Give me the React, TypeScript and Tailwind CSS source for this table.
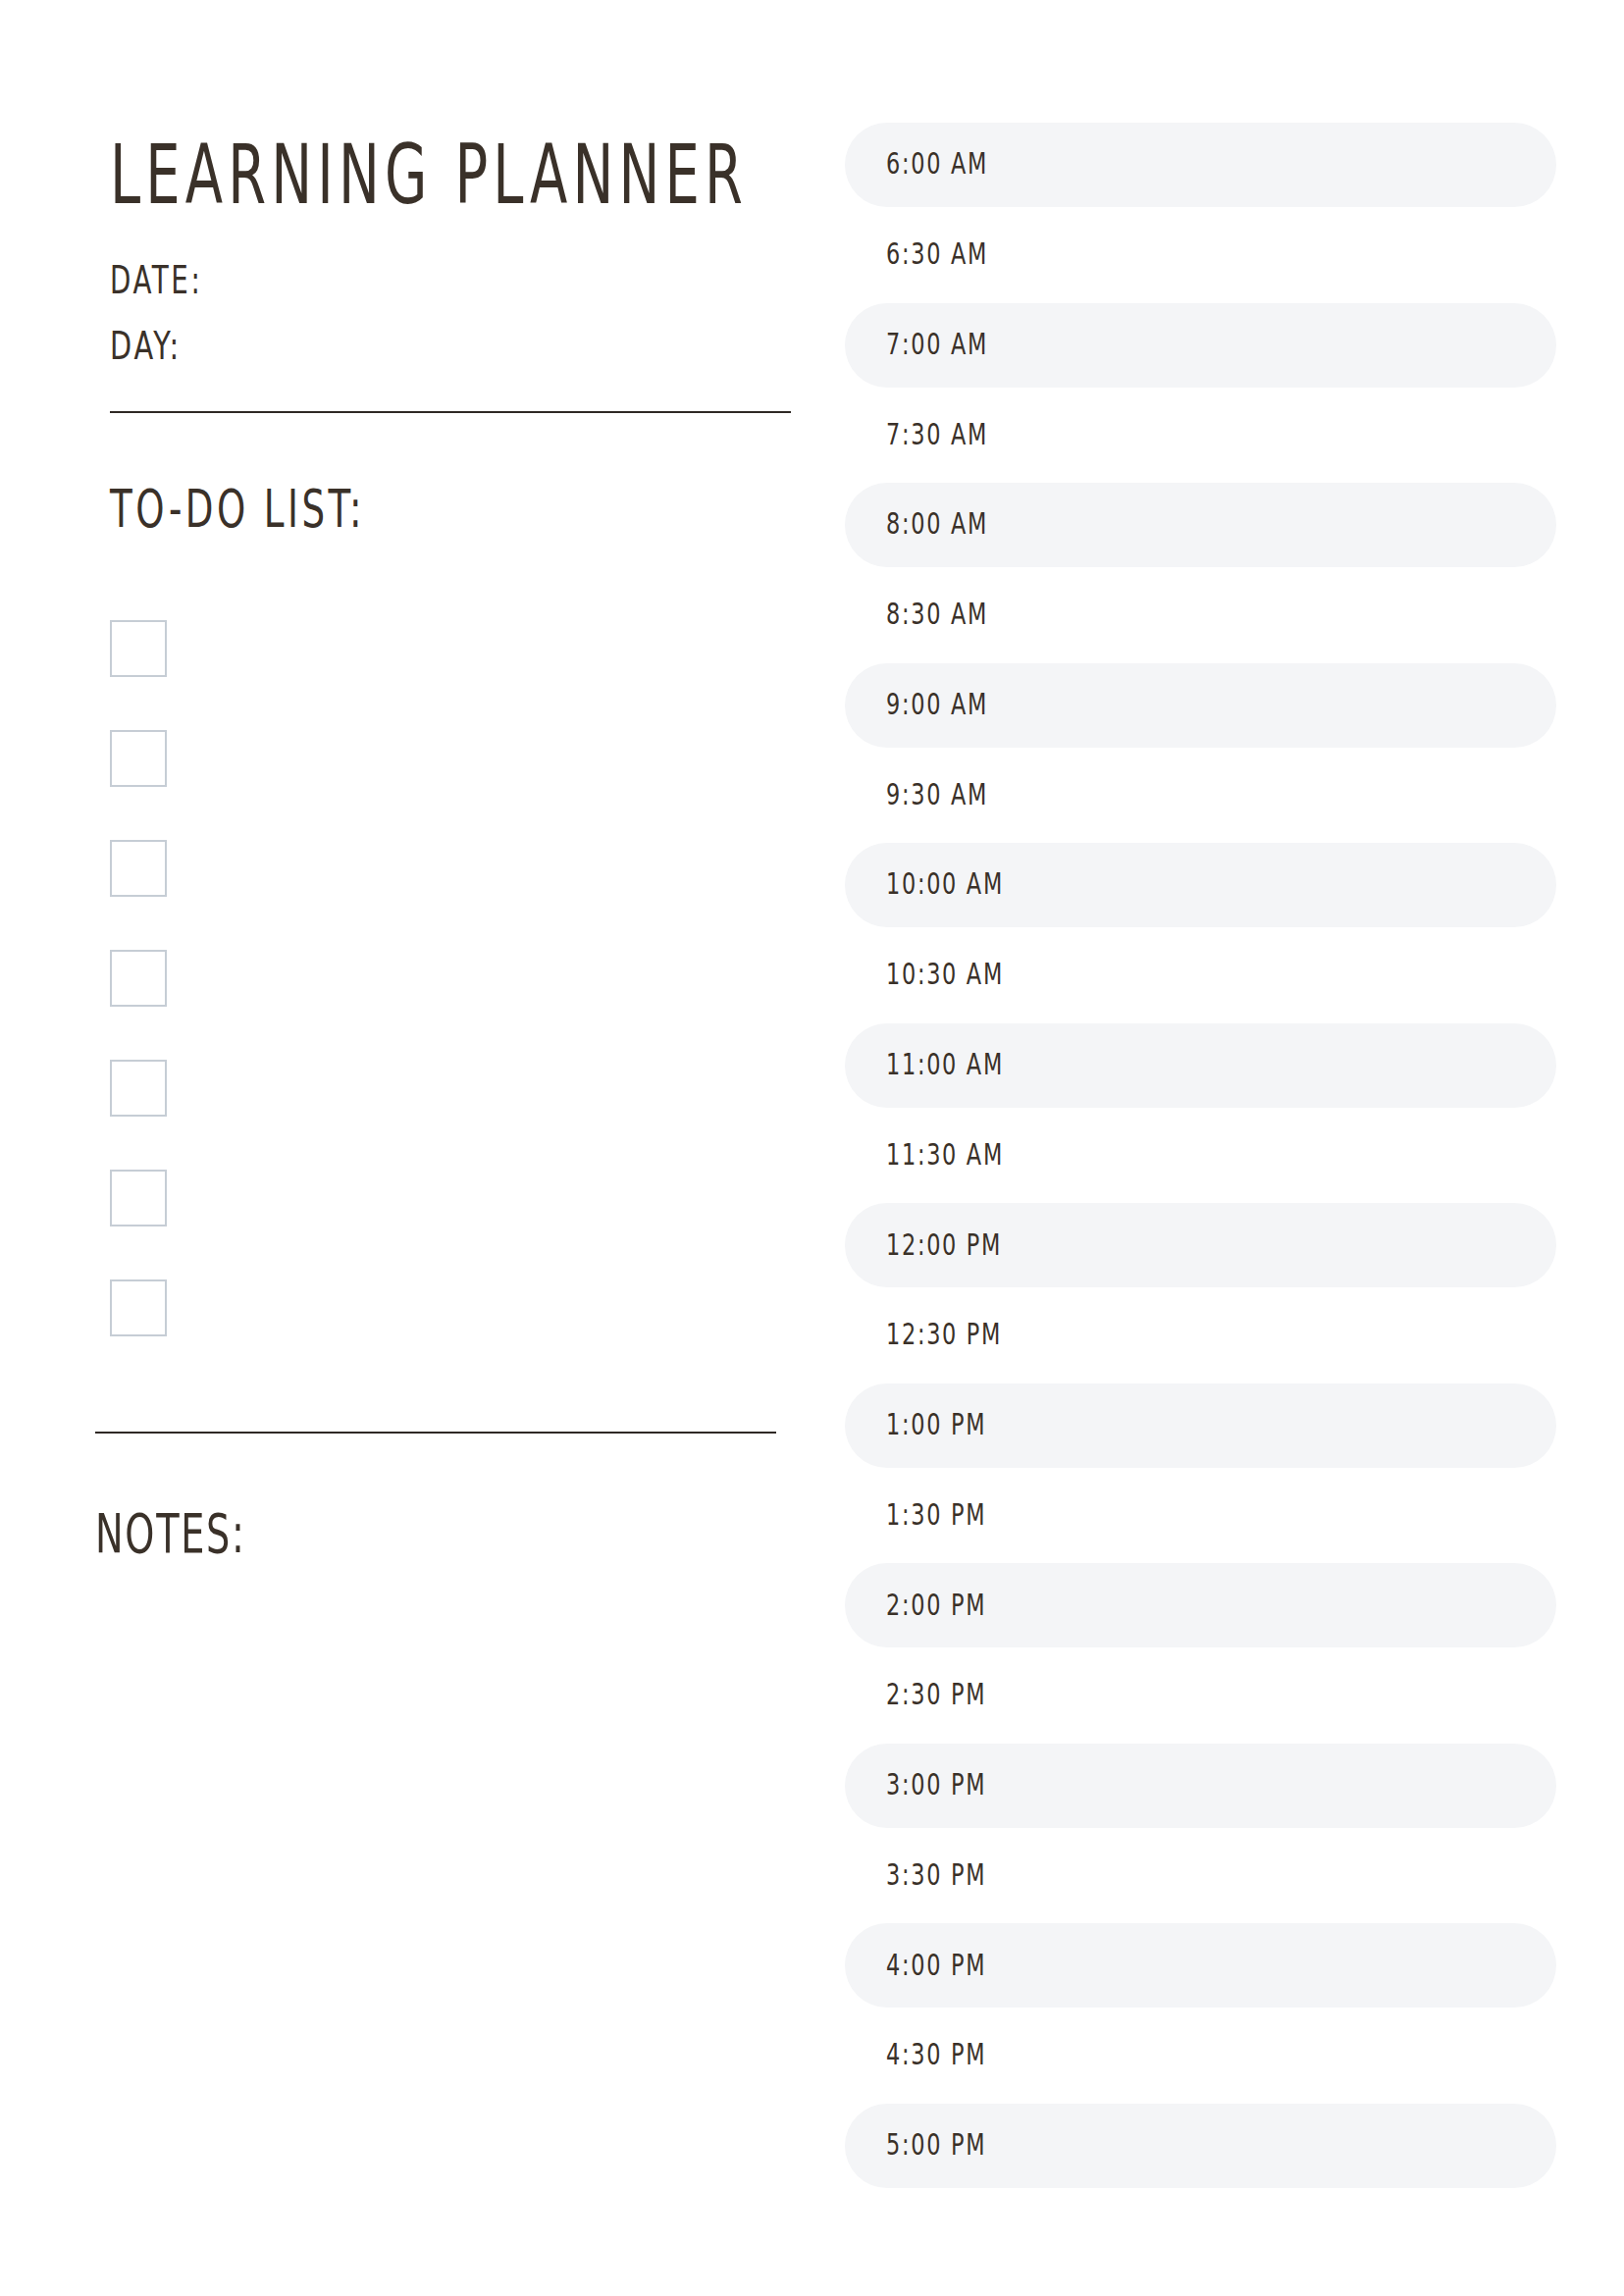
const times = [
    '6:00 AM', '6:30 AM', '7:00 AM', '7:30 AM', '8:00 AM', '8:30 AM', '9:00 AM', '9:30 AM',
    '10:00 AM', '10:30 AM', '11:00 AM', '11:30 AM', '12:00 PM', '12:30 PM', '1:00 PM', '1:30 PM',
    '2:00 PM', '2:30 PM', '3:00 PM', '3:30 PM', '4:00 PM', '4:30 PM', '5:00 PM',
];

const font = "font-['Liberation_Sans_Narrow','DejaVu_Sans_Condensed','Liberation_Sans',sans-serif]";

const App = () => {
    return (
        <div className={`w-[1655px] h-[2340px] bg-white text-[#3a3129] ${font} flex items-start pt-[125px]`}>
            {/* left column */}
            <div className="w-[764px] ml-[97px] pt-[11px] flex flex-col">
                <div className="ml-[15px] flex flex-col">
                    <h1 className="text-[84px] leading-none">
                        <span className="inline-block origin-left scale-x-[0.74] tracking-[7px] whitespace-nowrap">LEARNING PLANNER</span>
                    </h1>
                    <div className="mt-[46px] text-[39px] leading-none">
                        <span className="inline-block origin-left scale-x-[0.79] tracking-[3.4px]">DATE:</span>
                    </div>
                    <div className="mt-[28px] text-[39px] leading-none">
                        <span className="inline-block origin-left scale-x-[0.82] tracking-[3.4px]">DAY:</span>
                    </div>
                    <div className="mt-[47px] w-[694px] h-[2px] bg-[#2f2925]" />
                    <h2 className="mt-[71px] text-[53px] leading-none">
                        <span className="inline-block origin-left scale-x-[0.78] tracking-[4.4px] whitespace-nowrap">TO-DO LIST:</span>
                    </h2>
                    <div className="mt-[87px] flex flex-col gap-[54px]">
                        {Array.from({ length: 7 }).map((_, i) => (
                            <div key={i} className="w-[58px] h-[58px] border-2 border-[#c6cdd5]" />
                        ))}
                    </div>
                </div>
                <div className="mt-[97px] w-[694px] h-[2px] bg-[#2f2925]" />
                <h2 className="mt-[75px] text-[54.5px] leading-none">
                    <span className="inline-block origin-left scale-x-[0.78] tracking-[2.2px]">NOTES:</span>
                </h2>
            </div>

            {/* schedule */}
            <div className="w-[725px] flex flex-col gap-[5.77px]">
                {times.map((t, i) => (
                    <div
                        key={t}
                        className={`h-[86px] rounded-full flex items-center pl-[42px] ${i % 2 === 0 ? 'bg-[#f4f5f7]' : ''}`}
                    >
                        <span className="inline-block origin-left scale-x-[0.85] text-[29.3px] leading-none tracking-[2px] whitespace-nowrap">{t}</span>
                    </div>
                ))}
            </div>
        </div>
    );
}

export default App;
